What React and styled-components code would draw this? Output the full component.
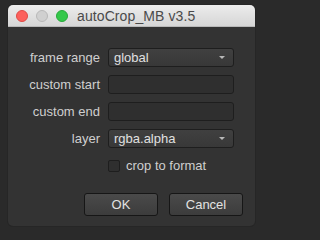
import React from 'react';
import styled, { createGlobalStyle } from 'styled-components';

const GlobalStyle = createGlobalStyle`
  html, body {
    margin: 0;
    padding: 0;
    background: #2a2a2a;
    width: 263px;
    height: 234px;
    overflow: hidden;
  }
  body {
    font-family: "Liberation Sans", Arial, sans-serif;
  }
`;

// ウィンドウ本体
const Page = styled.div`
  padding: 5px 8px 0 8px;
`;

const Window = styled.div`
  width: 247px;
  height: 221px;
  border-radius: 5px;
  background: #333333;
  box-shadow: 0 0 0 1px #262626;
  overflow: hidden;
  display: flex;
  flex-direction: column;
`;

// タイトルバー
const TitleBar = styled.div`
  height: 22px;
  display: flex;
  align-items: center;
  padding-left: 8px;
  background: linear-gradient(#ececec, #d6d6d6);
  border-bottom: 1px solid #b9b9b9;
  box-sizing: border-box;
`;

const Light = styled.span`
  width: 12px;
  height: 12px;
  border-radius: 50%;
  margin-right: 8px;
  box-sizing: border-box;
  background: ${p => p.color};
  border: 1px solid ${p => p.edge};
`;

const Title = styled.div`
  margin-left: 1px;
  font-size: 14px;
  color: #4a4a4a;
  letter-spacing: 0.1px;
`;

// フォーム
const Body = styled.div`
  flex: 1;
  display: flex;
  flex-direction: column;
  padding: 21px 12px 10px 8px;
`;

const Form = styled.div`
  display: grid;
  grid-template-columns: 84px 126px;
  column-gap: 8px;
  row-gap: 8px;
  align-items: center;
`;

const Label = styled.div`
  text-align: right;
  font-size: 13px;
  color: #cfcfcf;
`;

const Select = styled.div`
  height: 19px;
  box-sizing: border-box;
  border: 1px solid #1e1e1e;
  border-radius: 3px;
  background: linear-gradient(#404040, #383838);
  display: flex;
  align-items: center;
  justify-content: space-between;
  padding: 0 8px 0 5px;
  font-size: 13px;
  color: #e0e0e0;
`;

const Arrow = styled.span`
  width: 0;
  height: 0;
  border-left: 3px solid transparent;
  border-right: 3px solid transparent;
  border-top: 3px solid #b8b8b8;
`;

const Input = styled.div`
  height: 19px;
  box-sizing: border-box;
  border: 1px solid #1e1e1e;
  border-radius: 3px;
  background: #2f2f2f;
`;

const CheckRow = styled.label`
  grid-column: 2;
  margin-top: 2px;
  display: flex;
  align-items: center;
  gap: 6px;
  font-size: 13px;
  color: #cfcfcf;
`;

const Box = styled.span`
  width: 12px;
  height: 12px;
  box-sizing: border-box;
  border: 1px solid #1e1e1e;
  border-radius: 2px;
  background: #2f2f2f;
`;

const Buttons = styled.div`
  margin-top: auto;
  display: flex;
  justify-content: flex-end;
  gap: 11px;
`;

const Button = styled.button`
  width: 74px;
  height: 23px;
  border: 1px solid #161616;
  border-radius: 3px;
  background: linear-gradient(#4a4a4a, #3c3c3c);
  color: #e2e2e2;
  font-family: inherit;
  font-size: 13px;
  padding: 0;
`;

const App = () => (
  <>
    <GlobalStyle />
    <Page>
      <Window>
        <TitleBar>
          <Light color="#fc605c" edge="#de4a45" />
          <Light color="#d0d0d0" edge="#b8b8b8" />
          <Light color="#34c84a" edge="#27a93a" />
          <Title>autoCrop_MB v3.5</Title>
        </TitleBar>
        <Body>
          <Form>
            <Label>frame range</Label>
            <Select>global<Arrow /></Select>
            <Label>custom start</Label>
            <Input />
            <Label>custom end</Label>
            <Input />
            <Label>layer</Label>
            <Select>rgba.alpha<Arrow /></Select>
            <CheckRow><Box />crop to format</CheckRow>
          </Form>
          <Buttons>
            <Button>OK</Button>
            <Button>Cancel</Button>
          </Buttons>
        </Body>
      </Window>
    </Page>
  </>
);

export default App;
